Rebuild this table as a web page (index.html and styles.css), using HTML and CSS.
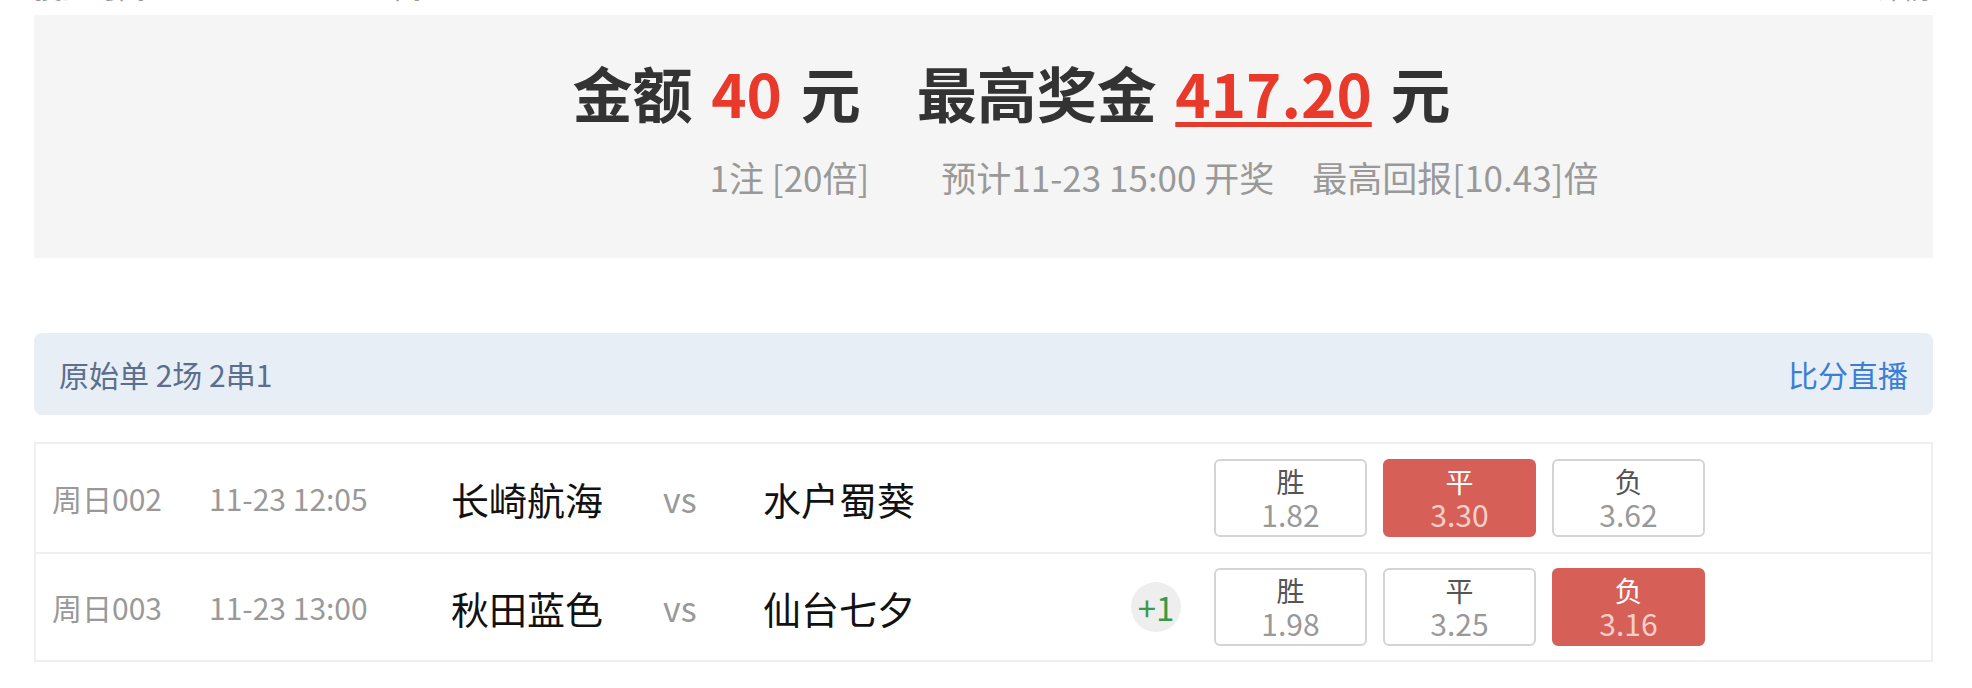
FILE: index.html
```html
<!DOCTYPE html>
<html lang="zh-CN">
<head>
<meta charset="utf-8">
<title>方案详情</title>
<link rel="stylesheet" href="styles.css">
</head>
<body>
<div class="page">
  <div class="topline">
    <span class="tl-left">投注时间</span>
    <span class="tl-mid">间</span>
    <span class="tl-right">详情</span>
  </div>

  <section class="summary">
    <div class="title">
      <span>金额 <em class="red">40</em> 元</span>
      <span class="group2">最高奖金 <em class="red under">417.20</em> 元</span>
    </div>
    <div class="sub">
      <span>1注 [20倍]</span>
      <span class="g2">预计11-23 15:00 开奖</span>
      <span class="g3">最高回报[10.43]倍</span>
    </div>
  </section>

  <div class="bar">
    <span class="bar-title">原始单 2场 2串1</span>
    <a class="bar-link">比分直播</a>
  </div>

  <div class="table">
    <div class="row">
      <span class="c-no">周日002</span>
      <span class="c-time">11-23 12:05</span>
      <span class="c-home">长崎航海</span>
      <span class="c-vs">vs</span>
      <span class="c-away">水户蜀葵</span>
      <span class="c-hcp"></span>
      <div class="odds">
        <div class="odd"><span class="lbl">胜</span><span class="val">1.82</span></div>
        <div class="odd on"><span class="lbl">平</span><span class="val">3.30</span></div>
        <div class="odd"><span class="lbl">负</span><span class="val">3.62</span></div>
      </div>
    </div>
    <div class="row">
      <span class="c-no">周日003</span>
      <span class="c-time">11-23 13:00</span>
      <span class="c-home">秋田蓝色</span>
      <span class="c-vs">vs</span>
      <span class="c-away">仙台七夕</span>
      <span class="c-hcp"><i class="hcp">+1</i></span>
      <div class="odds">
        <div class="odd"><span class="lbl">胜</span><span class="val">1.98</span></div>
        <div class="odd"><span class="lbl">平</span><span class="val">3.25</span></div>
        <div class="odd on"><span class="lbl">负</span><span class="val">3.16</span></div>
      </div>
    </div>
  </div>
</div>
</body>
</html>
```
FILE: styles.css
```css
* { box-sizing: border-box; }
html, body { margin: 0; padding: 0; background: #fff; }
body {
  font-family: "Noto Sans CJK SC", "Noto Sans", sans-serif;
  color: #333;
  width: 1972px;
  height: 688px;
  overflow: hidden;
}
.page { padding: 0 39px 0 34px; }

.topline {
  height: 15px;
  display: flex;
  font-size: 28px;
  line-height: 28px;
  color: #999;
}
.topline span { display: block; margin-top: -27px; }
.tl-left { margin-left: 0; }
.tl-mid { margin-left: 248px; }
.tl-right { margin-left: auto; margin-right: 2px; }

.summary {
  background: #f5f5f5;
  height: 243px;
  padding-top: 42px;
}
.title {
  display: flex;
  justify-content: center;
  padding-left: 56px;
  font-size: 60px;
  line-height: 70px;
  font-weight: bold;
  color: #333;
  white-space: pre;
  word-spacing: 5px;
}
.title em { font-style: normal; }
.red { color: #e8392b; }
.under {
  text-decoration: underline;
  text-decoration-thickness: 5px;
  text-underline-offset: 4px;
}
.group2 { margin-left: 56px; }

.sub {
  display: flex;
  justify-content: center;
  padding-left: 341px;
  margin-top: 30px;
  font-size: 35px;
  line-height: 40px;
  color: #999;
  white-space: pre;
}
.sub .g2 { margin-left: 72px; }
.sub .g3 { margin-left: 38px; }

.bar {
  margin-top: 75px;
  height: 82px;
  background: #e8eef5;
  border-radius: 8px;
  display: flex;
  align-items: center;
  justify-content: space-between;
  padding: 0 25px;
  font-size: 30px;
}
.bar-title { color: #5b6f8d; white-space: pre; }
.bar-link { color: #3b7ed6; }

.table {
  margin-top: 27px;
  border: 2px solid #efefef;
}
.row {
  height: 108px;
  display: flex;
  align-items: center;
  padding-left: 16px;
}
.row + .row { border-top: 2px solid #efefef; }

.c-no { width: 157px; font-size: 30px; color: #999; }
.c-time { width: 242px; font-size: 30px; color: #999; }
.c-home { width: 212px; font-size: 38px; color: #111; }
.c-vs { width: 100px; font-size: 34px; color: #999; }
.c-away { width: 368px; font-size: 38px; color: #111; }
.c-hcp { width: 83px; display: flex; }
.hcp {
  font-style: normal;
  width: 50px;
  height: 50px;
  border-radius: 50%;
  background: #eeeeee;
  color: #3a9a4b;
  font-size: 33px;
  display: flex;
  align-items: center;
  justify-content: center;
}

.odds { display: flex; gap: 16px; }
.odd {
  width: 153px;
  height: 78px;
  border: 2px solid #d4d4d4;
  border-radius: 6px;
  display: flex;
  flex-direction: column;
  align-items: center;
  justify-content: center;
}
.odd .lbl { font-size: 28px; line-height: 32px; color: #555; }
.odd .val { font-size: 30px; line-height: 34px; color: #999; }
.odd.on { background: #d65f57; border-color: #d65f57; }
.odd.on .lbl { color: #fff; }
.odd.on .val { color: #f6cfcb; }
```
